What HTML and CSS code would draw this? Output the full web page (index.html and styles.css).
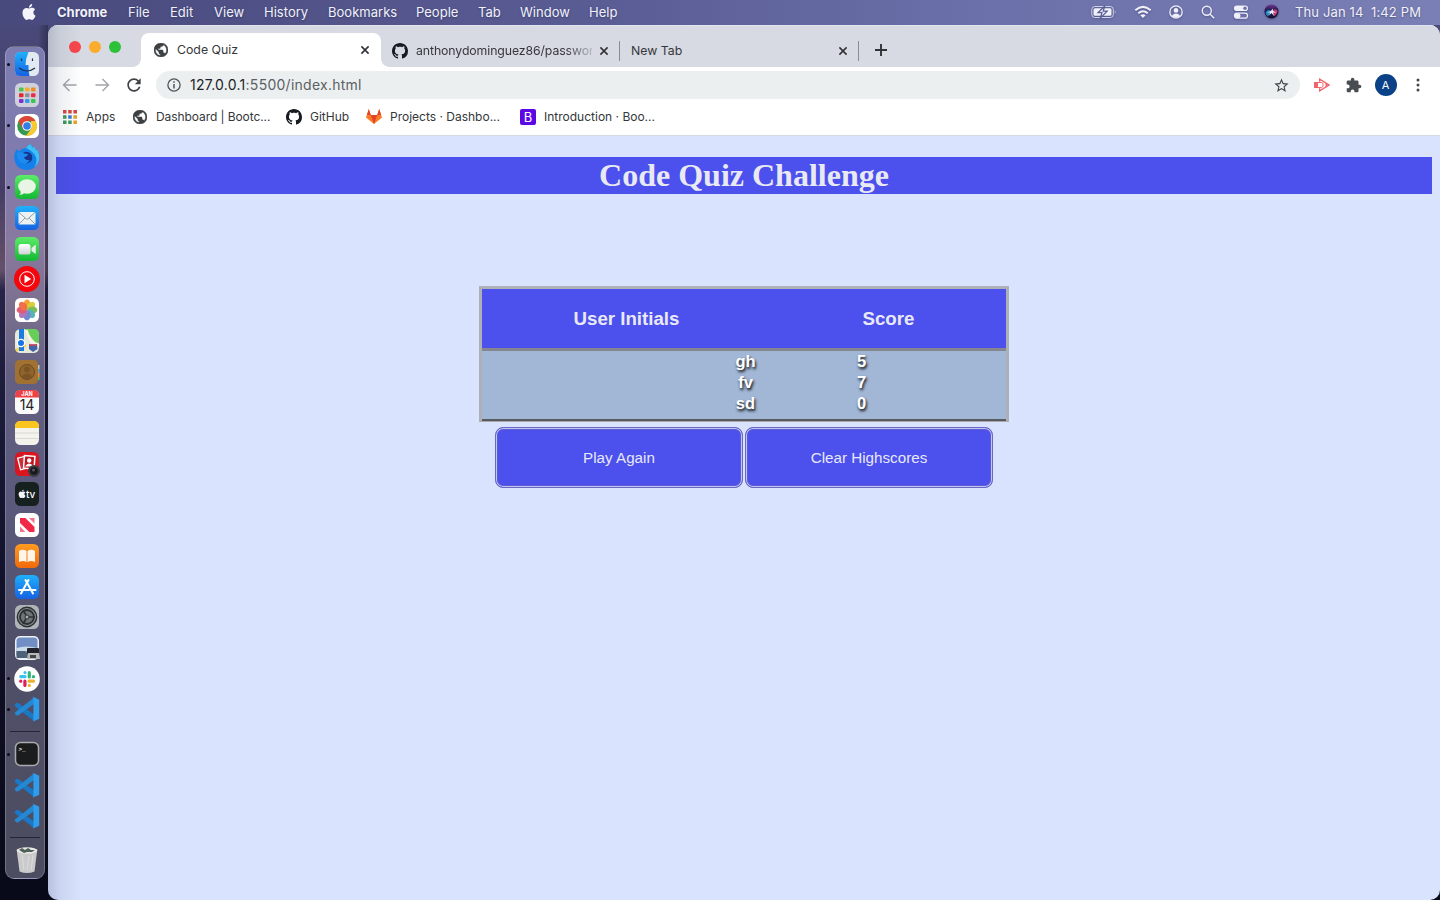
FILE: index.html
```html
<!DOCTYPE html>
<html lang="en">
<head>
<meta charset="utf-8">
<title>Code Quiz</title>
<link rel="stylesheet" href="styles.css">
</head>
<body>
<svg class="defs" width="0" height="0">
  <defs>
    <linearGradient id="blue" x2="0" y2="1"><stop stop-color="#1fb0fb"/><stop offset="1" stop-color="#1662e2"/></linearGradient>
    <linearGradient id="green" x2="0" y2="1"><stop stop-color="#5cec68"/><stop offset="1" stop-color="#12b832"/></linearGradient>
    <linearGradient id="orange" x2="0" y2="1"><stop stop-color="#ff9b22"/><stop offset="1" stop-color="#f26a0b"/></linearGradient>
    <linearGradient id="silver" x2="0" y2="1"><stop stop-color="#fff"/><stop offset="1" stop-color="#d0d3d6"/></linearGradient>
    <linearGradient id="siriFill" x2="0" y2="1"><stop stop-color="#7a3596"/><stop offset=".4" stop-color="#1d1b48"/><stop offset="1" stop-color="#15122f"/></linearGradient>
    <symbol id="globe" viewBox="2 2 20 20"><path d="M12 2C6.48 2 2 6.48 2 12s4.48 10 10 10 10-4.48 10-10S17.52 2 12 2zm-1 17.93c-3.95-.49-7-3.85-7-7.93 0-.62.08-1.21.21-1.79L9 15v1c0 1.1.9 2 2 2v1.93zm6.9-2.54c-.26-.81-1-1.39-1.9-1.39h-1v-3c0-.55-.45-1-1-1H8v-2h2c.55 0 1-.45 1-1V7h2c1.1 0 2-.9 2-2v-.41c2.93 1.19 5 4.06 5 7.41 0 2.08-.8 3.97-2.1 5.39z" fill="#3c4043" stroke="#3c4043" stroke-width=".7"/></symbol>
    <symbol id="github" viewBox="0 0 16 16"><path fill="#161b22" d="M8 0C3.58 0 0 3.58 0 8c0 3.54 2.29 6.53 5.47 7.59.4.07.55-.17.55-.38 0-.19-.01-.82-.01-1.49-2.01.37-2.53-.49-2.69-.94-.09-.23-.48-.94-.82-1.13-.28-.15-.68-.52-.01-.53.63-.01 1.08.58 1.23.82.72 1.21 1.87.87 2.33.66.07-.52.28-.87.51-1.07-1.78-.2-3.64-.89-3.64-3.95 0-.87.31-1.59.82-2.15-.08-.2-.36-1.02.08-2.12 0 0 .67-.21 2.2.82.64-.18 1.32-.27 2-.27s1.36.09 2 .27c1.53-1.04 2.2-.82 2.2-.82.44 1.1.16 1.92.08 2.12.51.56.82 1.27.82 2.15 0 3.07-1.87 3.75-3.65 3.95.29.25.54.73.54 1.48 0 1.07-.01 1.93-.01 2.2 0 .21.15.46.55.38A8.01 8.01 0 0 0 16 8c0-4.42-3.58-8-8-8z"/></symbol>
    <symbol id="close" viewBox="0 0 10 10"><path d="M1.4 1.4l7.2 7.2M8.6 1.4L1.4 8.6" stroke="#303236" stroke-width="1.6"/></symbol>
    <symbol id="apple" viewBox="0 0 24 24"><path fill="#f4f4fa" d="M12.152 6.896c-.948 0-2.415-1.078-3.96-1.04-2.04.027-3.91 1.183-4.961 3.014-2.117 3.675-.546 9.103 1.519 12.09 1.013 1.454 2.208 3.09 3.792 3.039 1.52-.065 2.09-.987 3.935-.987 1.831 0 2.35.987 3.96.948 1.637-.026 2.676-1.48 3.676-2.948 1.156-1.688 1.636-3.325 1.662-3.415-.039-.013-3.182-1.221-3.22-4.857-.026-3.04 2.48-4.494 2.597-4.559-1.429-2.09-3.623-2.324-4.39-2.376-2-.156-3.675 1.09-4.61 1.09zM15.53 3.83c.843-1.012 1.4-2.427 1.245-3.83-1.207.052-2.662.805-3.532 1.818-.78.896-1.454 2.338-1.273 3.714 1.338.104 2.715-.688 3.559-1.701"/></symbol>
    <symbol id="vscode" viewBox="0 0 26 26"><path d="M.8 8.600l1.700-1.700 1.800.1L20 18.500v6.500L.9 10.200z" fill="#1a78c6"/><path d="M20 1.500v6.500L4.300 19.300l-1.800.1-1.700-1.700.1-1.300z" fill="#2588d2"/><path d="M18.500.5l6.700 3.200v19l-6.700 3c.6-.4.900-.9.900-1.700V2.200c0-.7-.3-1.300-.9-1.700z" fill="#2f9dec"/></symbol>
  </defs>
</svg>

<header class="menubar">
  <svg class="apple" width="16" height="16"><use href="#apple"/></svg>
  <nav class="menus"><b>Chrome</b><span>File</span><span>Edit</span><span>View</span><span>History</span><span>Bookmarks</span><span>People</span><span>Tab</span><span>Window</span><span>Help</span></nav>
  <div class="status">
    <svg width="26" height="16" viewBox="0 0 26 16"><rect x=".8" y="2.500" width="21.500" height="11" rx="3" fill="none" stroke="#d2d2e7"/><rect x="2.500" y="4.200" width="18" height="7.600" rx="1.500" fill="#f0f0fa"/><path d="M13.800 2L7 8.700h4L9.300 14l6.900-6.900h-4z" fill="#f0f0fa" stroke="#575c94" stroke-width="1.200"/><path d="M23.800 6.200v3.600q1.600-1.800 0-3.600" fill="#d2d2e7"/></svg>
    <svg width="18" height="14" viewBox="0 0 18 14"><g fill="none" stroke="#f0f0fa" stroke-width="2"><path d="M1.300 5.200q7.700-6.600 15.400 0"/><path d="M4.300 8.200q4.700-3.900 9.400 0"/></g><path d="M6.300 10.200q2.700-2 5.400 0L9 13z" fill="#f0f0fa"/></svg>
    <svg width="14" height="14" viewBox="0 0 14 14"><circle cx="7" cy="7" r="6.200" fill="none" stroke="#f0f0fa" stroke-width="1.300"/><circle cx="7" cy="5.400" r="2.300" fill="#f0f0fa"/><path d="M2.700 11q4.300-4.800 8.600 0-4.300 3.300-8.600 0" fill="#f0f0fa"/></svg>
    <svg width="14" height="14" viewBox="0 0 14 14"><g fill="none" stroke="#f0f0fa" stroke-width="1.400"><circle cx="5.800" cy="5.800" r="4.500"/><path d="M9.200 9.200l4 4"/></g></svg>
    <svg width="16" height="16" viewBox="0 0 16 16"><rect x="1" y="1.400" width="14" height="5.600" rx="2.800" fill="#f0f0fa"/><circle cx="12" cy="4.200" r="1.700" fill="#6d70a8"/><rect x="1.500" y="9.200" width="13" height="5" rx="2.500" fill="none" stroke="#f0f0fa" stroke-width="1.200"/><rect x="1.500" y="9.200" width="6" height="5" rx="2.500" fill="#f0f0fa"/></svg>
    <svg width="15" height="15" viewBox="0 0 15 15"><circle cx="7.500" cy="7.500" r="7" fill="url(#siriFill)"/><path d="M1.500 8.500Q4 4.500 7.500 7L4 12.500Q2 11 1.500 8.500z" fill="#2b86c9"/><path d="M8 7q3-3.500 5.700 0-1 4-3.200 5.200z" fill="#c23a72"/><path d="M3 8.500L7 7l1.500-2.500L9 7l3.500 1.500L9 8.500l1.200 3.700L7.500 9 5 11.500l1.200-3z" fill="#e6f3fb"/></svg>
  </div>
  <time>Thu Jan 14&nbsp; 1:42 PM</time>
</header>

<div class="desktop">
<aside class="rail"><div class="dock">
  <div class="app running"><svg viewBox="0 0 26 26"><rect x="1" y="1" width="24" height="24" rx="5.500" fill="#e3e9f0"/><path d="M14.500 1q-3 7-3 13h3q-.2 6 1 11H6.500Q1 25 1 19.500v-13Q1 1 6.500 1z" fill="url(#blue)"/><path d="M7.500 7.500v2.600M18.500 7.500v2.600M5 17q8 6 16 0" stroke="#17304b" stroke-width="1.200" fill="none"/></svg></div>
  <div class="app"><svg viewBox="0 0 26 26"><rect x="1" y="1" width="24" height="24" rx="5.500" fill="#cfd0dc"/><g><rect x="5" y="5.500" width="4.500" height="4" rx="1" fill="#4ac64b"/><rect x="11" y="5.500" width="4.500" height="4" rx="1" fill="#f2af27"/><rect x="17" y="5.500" width="4.500" height="4" rx="1" fill="#f08a1d"/><rect x="5" y="11.200" width="4.500" height="4" rx="1" fill="#e4272d"/><rect x="11" y="11.200" width="4.500" height="4" rx="1" fill="#8d9197"/><rect x="17" y="11.200" width="4.500" height="4" rx="1" fill="#e82c4b"/><rect x="5" y="17" width="4.500" height="4" rx="1" fill="#8131ca"/><rect x="11" y="17" width="4.500" height="4" rx="1" fill="#2d9fe6"/><rect x="17" y="17" width="4.500" height="4" rx="1" fill="#37c552"/></g></svg></div>
  <div class="app running"><svg viewBox="0 0 26 26"><rect x="1" y="1" width="24" height="24" rx="5.500" fill="#fff"/><circle cx="13" cy="13" r="9.800" fill="#36994f"/><path d="M4.500 8A9.800 9.800 0 0 1 21.500 8H13l-4.500 7.500z" fill="#dd4537"/><path d="M21.500 8A9.800 9.800 0 0 1 12 22.800L17.400 15.500 17 8z" fill="#f9c832"/><circle cx="13" cy="13" r="4.800" fill="#fff"/><circle cx="13" cy="13" r="3.800" fill="#347de8"/></svg></div>
  <div class="app"><svg viewBox="0 0 26 26"><path d="M2.500 5l2.500 2.500Q8 4 12 4q2-3.500 5-4 0 2.500 2 4l1-1.500q1.500 1.500 2 4l1.500-1q3 8 1 12.500-3.500 8-11.500 8Q4 26 1 18-1 11 2.500 5z" fill="#1580ea"/><path d="M12 4q2-3.500 5-4 0 2.500 2 4l1-1.500q1.500 1.500 2 4l1.500-1q3 8 1 12.500-1.500 3.500-4.500 5.500 3.500-5 2-10-2-6-10-9.500z" fill="#3fc0f5"/><circle cx="12.500" cy="13.500" r="5.800" fill="#15368c"/><path d="M2.500 9q4-2 7.500.5l4 .5q-.5 2.500-4 3 1.500 4 6 3-3 4.500-8 3Q3 16.500 2.500 9z" fill="#1c8cf0"/></svg></div>
  <div class="app running"><svg viewBox="0 0 26 26"><rect x="1" y="1" width="24" height="24" rx="5.500" fill="url(#green)"/><ellipse cx="13" cy="12.500" rx="8.800" ry="7.300" fill="#e8f4e4"/><path d="M7 17q0 3-2 4 4 0 6-3" fill="#e8f4e4"/></svg></div>
  <div class="app"><svg viewBox="0 0 26 26"><rect x="1" y="1" width="24" height="24" rx="5.500" fill="url(#blue)"/><rect x="4.500" y="7" width="17" height="12.500" rx="1.500" fill="#eef1f2"/><path d="M5 7.500l8 7 8-7M5 19l6-6M21 19l-6-6" fill="none" stroke="#97a0a7"/></svg></div>
  <div class="app"><svg viewBox="0 0 26 26"><rect x="1" y="1" width="24" height="24" rx="5.500" fill="url(#green)"/><rect x="4.500" y="8" width="12" height="10.500" rx="2.500" fill="url(#silver)"/><path d="M17.500 12l3.500-3q.8-.4.8.5v7.700q0 .8-.8.4l-3.500-2.600z" fill="#e5eee5"/></svg></div>
  <div class="app"><svg viewBox="0 0 26 26"><circle cx="13" cy="13" r="13" fill="#f5050c"/><circle cx="13" cy="13" r="7.300" fill="none" stroke="#fff" stroke-width="1"/><path d="M10.500 8.800l6.700 4.200-6.700 4.200z" fill="#fff"/></svg></div>
  <div class="app"><svg viewBox="0 0 26 26"><rect x="1" y="1" width="24" height="24" rx="5.500" fill="#fff"/><g opacity=".92"><ellipse cx="13" cy="7.600" rx="3.500" ry="5" fill="#f59a27"/><ellipse cx="13" cy="7.600" rx="3.500" ry="5" fill="#d8ca2a" transform="rotate(45 13 13)"/><ellipse cx="13" cy="7.600" rx="3.500" ry="5" fill="#70b84b" transform="rotate(90 13 13)"/><ellipse cx="13" cy="7.600" rx="3.500" ry="5" fill="#4cadb1" transform="rotate(135 13 13)"/><ellipse cx="13" cy="7.600" rx="3.500" ry="5" fill="#657fce" transform="rotate(180 13 13)"/><ellipse cx="13" cy="7.600" rx="3.500" ry="5" fill="#a66cb8" transform="rotate(225 13 13)"/><ellipse cx="13" cy="7.600" rx="3.500" ry="5" fill="#e24c68" transform="rotate(270 13 13)"/><ellipse cx="13" cy="7.600" rx="3.500" ry="5" fill="#ef6438" transform="rotate(315 13 13)"/></g></svg></div>
  <div class="app"><svg viewBox="0 0 26 26"><rect x="1" y="1" width="24" height="24" rx="5.500" fill="#e8ead9"/><path d="M11 1h8.500Q25 1 25 6.500V15Q12 14 11 1z" fill="#68ce5a"/><path d="M12 2q4 13 13 16" stroke="#f7f3e8" stroke-width="3" fill="none"/><path d="M2 22.500L12 17" stroke="#fbd34a" stroke-width="3"/><path d="M5 1h5v22H5z" fill="#1c7be0"/><circle cx="7" cy="15" r="4.300" fill="#fff"/><circle cx="7" cy="15" r="3" fill="#1675e6"/><path d="M15 16q4 1 8 0l.5 5-4.500 3-4-3z" fill="#4265a9"/><path d="M15 17h8" stroke="#d34254" stroke-width="1.500"/></svg></div>
  <div class="app"><svg viewBox="0 0 26 26"><path d="M23 6h2.500v4H23z" fill="#c6c6c1"/><path d="M23 10h2.500v4H23z" fill="#54a4c7"/><path d="M23 14h2.500v4H23z" fill="#f18c3e"/><path d="M23 18h2.500v3H23z" fill="#53ba5c"/><rect x="1" y="1" width="23" height="24" rx="4.500" fill="#a07132"/><circle cx="13" cy="13" r="7.500" fill="#8f632c" stroke="#6f4a1e"/><circle cx="13" cy="10.500" r="3" fill="#7b5425"/><path d="M7.500 17.500q5.500-6 11 0-5.500 5-11 0" fill="#7b5425"/></svg></div>
  <div class="app"><svg viewBox="0 0 26 26"><rect x="1" y="1" width="24" height="24" rx="5.500" fill="#fafafa"/><path d="M1 8.500v-2Q1 1 6.500 1h13Q25 1 25 6.500v2z" fill="#ee4146"/><text x="13" y="7" class="cal-month">JAN</text><text x="13" y="20.800" class="cal-day">14</text></svg></div>
  <div class="app"><svg viewBox="0 0 26 26"><rect x="1" y="1" width="24" height="24" rx="5.500" fill="#f3f2ed"/><path d="M1 8V6.500Q1 1 6.500 1h13Q25 1 25 6.500V8z" fill="#fbc520"/><path d="M1 13h24M1 18.500h24" stroke="#d4d2cd" stroke-width=".8"/></svg></div>
  <div class="app"><svg viewBox="0 0 26 26"><rect x="1" y="1" width="24" height="24" rx="5.500" fill="#db1520"/><rect x="5" y="6" width="9" height="12" fill="#c9303a" stroke="#fff" stroke-width="1.300" transform="rotate(-14 9 12)"/><rect x="10" y="5" width="10.500" height="12.500" fill="#bb1824" stroke="#fff" stroke-width="1.500" transform="rotate(4 15 11)"/><circle cx="15.200" cy="9.500" r="2.200" fill="#fff"/><path d="M11 15.500q4-6 8.500 0z" fill="#fff"/><circle cx="20" cy="20" r="6" fill="#393b40"/><circle cx="20" cy="20" r="3.800" fill="#17181d"/><circle cx="19.500" cy="19" r="1.500" fill="#595461"/></svg></div>
  <div class="app"><svg viewBox="0 0 26 26"><rect x="1" y="1" width="24" height="24" rx="5.500" fill="#16201f"/><use href="#apple" x="3.800" y="8.500" width="8.500" height="8.500"/><text x="12" y="16.500" class="tv">tv</text></svg></div>
  <div class="app"><svg viewBox="0 0 26 26"><rect x="1" y="1" width="24" height="24" rx="5.500" fill="#fff"/><path d="M6 6h5.300L20.500 15v5h-5.200L6 11z" fill="#f02747"/><path d="M15 6h5.500v5.500zM6 14.500V20h5.500z" fill="#ee778b"/></svg></div>
  <div class="app"><svg viewBox="0 0 26 26"><rect x="1" y="1" width="24" height="24" rx="5.500" fill="url(#orange)"/><path d="M12.500 8Q9 5.500 5 8v11q4-2 7.500 0zM13.500 8Q17 5.500 21 8v11q-4-2-7.500 0z" fill="#fff6e9"/></svg></div>
  <div class="app"><svg viewBox="0 0 26 26"><rect x="1" y="1" width="24" height="24" rx="5.500" fill="url(#blue)"/><path d="M11.500 6l7.500 13.500M14.500 6L7 19.500M5 16h10M18 16h3.500" stroke="#fff" stroke-width="2" stroke-linecap="round"/></svg></div>
  <div class="app"><svg viewBox="0 0 26 26"><rect x="1" y="1" width="24" height="24" rx="5.500" fill="#aeb5b8"/><circle cx="13" cy="13" r="9.700" fill="#898e91" stroke="#2e3235" stroke-width="1.400"/><circle cx="13" cy="13" r="7" fill="#70757a" stroke="#2e3235" stroke-width="1.800"/><circle cx="13" cy="13" r="2" fill="#a9afb1" stroke="#2e3235"/><path d="M15 13h6M12 11L9 6M12 15l-3 5" stroke="#2e3235" stroke-width="1.700"/></svg></div>
  <div class="app"><svg viewBox="0 0 26 26"><rect x="1" y="1" width="24" height="24" rx="5" fill="#eef1f5"/><rect x="2.500" y="2.500" width="21" height="20" rx="3.500" fill="#718fc4"/><path d="M2.500 13q10-3 21 0v3h-21z" fill="#cbdce8"/><path d="M2.500 16l8 0 4 3v4h-12z" fill="#4d6179"/><rect x="13" y="13" width="12" height="6" rx="1" fill="#202329"/><path d="M14 18h11l1 6H13z" fill="#b7b9b5"/><path d="M16 20h6v3h-6z" fill="#42464b"/></svg></div>
  <div class="app running"><svg viewBox="0 0 26 26"><circle cx="13" cy="13" r="12.800" fill="#fff"/><g stroke-width="3.200" stroke-linecap="round"><path d="M6.700 10.600h4.400M11 6.500v.1" stroke="#36c5f0"/><path d="M15.300 6.700v4.300M19.400 10.700h.1" stroke="#2eb67d"/><path d="M15.100 15.200h4.400M15.300 19.400v.1" stroke="#ecb22e"/><path d="M10.900 15.200v4.300M6.700 15.200h.1" stroke="#e01e5a"/></g></svg></div>
  <div class="app running"><svg><use href="#vscode"/></svg></div>
  <hr>
  <div class="app running"><svg viewBox="0 0 26 26"><rect x="1.500" y="1.500" width="23" height="23" rx="5" fill="#1b1c1d" stroke="#a9acae" stroke-width="1.500"/><text x="4.500" y="10" class="prompt">&gt;_</text></svg></div>
  <div class="app"><svg><use href="#vscode"/></svg></div>
  <div class="app"><svg><use href="#vscode"/></svg></div>
  <hr>
  <div class="app"><svg viewBox="0 0 26 26"><path d="M2.700 2.500h20.600l-2.800 22q-7.500 3-15 0z" fill="#c9cac9"/><ellipse cx="13" cy="3.500" rx="10.300" ry="3.200" fill="#e8e9e6"/><path d="M5 3l3-2 3 2 3-2 3 2 4 0-3 2-5 0-3 1z" fill="#505f59"/><path d="M8 8l2 15M15 9l-2 14M19 8l-2 15" stroke="#dbdcdb" fill="none"/></svg></div>
</div></aside>

<main class="window">
  <div class="tabstrip">
    <div class="lights"><i class="red"></i><i class="amber"></i><i class="lime"></i></div>
    <div class="tab active"><svg width="14" height="14"><use href="#globe"/></svg><span>Code Quiz</span><svg class="x" width="10" height="10"><use href="#close"/></svg></div>
    <div class="tab repo"><svg width="16" height="16"><use href="#github"/></svg><span class="fade">anthonydominguez86/passwor</span><svg class="x" width="10" height="10"><use href="#close"/></svg></div>
    <div class="tab blank"><span>New Tab</span><svg class="x" width="10" height="10"><use href="#close"/></svg></div>
    <svg class="plus" width="12" height="12" viewBox="0 0 12 12"><path d="M6 0v12M0 6h12" stroke="#303236" stroke-width="1.900"/></svg>
  </div>
  <div class="toolbar">
    <svg width="20" height="20" viewBox="0 0 20 20"><path d="M16.500 10h-13M9.500 4l-6 6 6 6" fill="none" stroke="#a2a4a7" stroke-width="1.400"/></svg>
    <svg width="20" height="20" viewBox="0 0 20 20"><path d="M3.500 10h13M10.500 4l6 6-6 6" fill="none" stroke="#a2a4a7" stroke-width="1.400"/></svg>
    <svg width="20" height="20" viewBox="0 0 24 24"><path fill="#3f4246" d="M17.650 6.350C16.200 4.900 14.210 4 12 4c-4.420 0-7.990 3.580-7.990 8s3.570 8 7.990 8c3.730 0 6.840-2.550 7.730-6h-2.080c-.82 2.330-3.040 4-5.650 4-3.310 0-6-2.690-6-6s2.690-6 6-6c1.660 0 3.140.69 4.220 1.780L13 11h7V4l-2.350 2.350z"/></svg>
    <div class="omnibox">
      <svg width="14" height="14" viewBox="0 0 14 14"><circle cx="7" cy="7" r="6.100" fill="none" stroke="#515458" stroke-width="1.300"/><path d="M7 6v4.500M7 3.300v1.500" stroke="#515458" stroke-width="1.500"/></svg>
      <span class="url"><em>127.0.0.1</em>:5500/index.html</span>
      <svg class="star" width="17" height="17" viewBox="0 0 24 24"><path fill="#44474b" d="M22 9.240l-7.190-.62L12 2 9.190 8.630 2 9.240l5.460 4.730L5.820 21 12 17.270 18.180 21l-1.630-7.030L22 9.240zM12 15.400l-3.760 2.270 1-4.280-3.320-2.880 4.380-.38L12 6.100l1.710 4.040 4.380.38-3.320 2.880 1 4.280L12 15.400z"/></svg>
    </div>
    <div class="extensions">
      <svg width="16" height="14" viewBox="0 0 16 14"><path d="M0 4h4v6H0z" fill="#f2646b"/><path d="M5.700 3.700V1.200L15 7l-9.300 5.800v-2.500" fill="none" stroke="#f2646b" stroke-width="1.400"/><path d="M4 4.500h3.500l1.500 1v3l-1.500 1H4" fill="none" stroke="#f2646b"/><path d="M11.500 5l3 2-3 2z" fill="#f2646b"/></svg>
      <svg width="16" height="16" viewBox="1 0 23 23"><path fill="#494c50" d="M20.500 11H19V7c0-1.100-.9-2-2-2h-4V3.500C13 2.120 11.880 1 10.500 1S8 2.120 8 3.500V5H4c-1.100 0-1.990.9-1.990 2v3.800H3.500c1.490 0 2.700 1.210 2.700 2.700s-1.210 2.700-2.700 2.700H2V20c0 1.100.9 2 2 2h3.800v-1.500c0-1.490 1.210-2.700 2.700-2.700 1.490 0 2.700 1.210 2.700 2.700V22H17c1.100 0 2-.9 2-2v-4h1.500c1.380 0 2.500-1.120 2.500-2.500S21.880 11 20.500 11z"/></svg>
      <span class="avatar">A</span>
      <svg width="4" height="14" viewBox="0 0 4 14"><g fill="#44474b"><circle cx="2" cy="2" r="1.500"/><circle cx="2" cy="7" r="1.500"/><circle cx="2" cy="12" r="1.500"/></g></svg>
    </div>
  </div>
  <div class="bookmarks">
    <span><svg width="14" height="14" viewBox="0 0 14 14"><path d="M0 0h3.500v3.500H0zM5.200 0h3.500v3.500H5.200zM10.400 0H14v3.500h-3.600z" fill="#d7483f"/><path d="M0 5.200h3.500v3.500H0z" fill="#3d9b5b"/><path d="M5.200 5.200h3.500v3.500H5.200z" fill="#3978d8"/><path d="M10.400 5.200H14v3.500h-3.600zM10.400 10.400H14V14h-3.600z" fill="#e6a329"/><path d="M0 10.400h3.500V14H0zM5.200 10.400h3.500V14H5.200z" fill="#3d9b5b"/></svg>Apps</span>
    <span><svg width="14" height="14"><use href="#globe"/></svg>Dashboard | Bootc...</span>
    <span><svg width="16" height="16"><use href="#github"/></svg>GitHub</span>
    <span><svg width="16" height="15" viewBox="0 0 16 15"><path d="M8 15L0 8.500 2.800 0l2 6h6.400l2-6L16 8.500z" fill="#fc7b26"/><path d="M8 15L4.800 6h6.400z" fill="#e24329"/><path d="M2.800 0L.9 6h3.900zM13.200 0l1.900 6h-3.900z" fill="#e24329"/></svg>Projects · Dashbo...</span>
    <span><i class="bootstrap">B</i>Introduction · Boo...</span>
  </div>
  <section class="page">
    <h1>Code Quiz Challenge</h1>
    <div class="scores">
      <div class="score-head"><span>User Initials</span><span>Score</span></div>
      <div class="score-body">
        <span>gh</span><span>5</span>
        <span>fv</span><span>7</span>
        <span>sd</span><span>0</span>
      </div>
    </div>
    <div class="actions"><button>Play Again</button><button>Clear Highscores</button></div>
  </section>
</main>
</div>
</body>
</html>
```

FILE: styles.css
```css
* { box-sizing: border-box; }

body {
  margin: 0;
  width: 1440px;
  height: 900px;
  overflow: hidden;
  display: flex;
  flex-direction: column;
  font-family: Inter, "Liberation Sans", sans-serif;
  background: linear-gradient(180deg, #4a4b7e 0, #46426c 100px, #463e66 190px, #645069 270px, #282449 290px, #1b1b3b 400px, #101027 620px, #080a18 900px);
}

svg { display: block; flex: none; }
.defs { position: absolute; }

.menubar {
  height: 25px;
  flex: none;
  display: flex;
  align-items: center;
  padding: 0 0 2px 21px;
  font-size: 13px;
  color: #f1f1fa;
  background: linear-gradient(90deg, #484a7d, #595b93 40%, #6b70aa 68%, #7a7fb5);
  text-shadow: 0 1px 2px #24264f80;
}
.menus {
  margin-left: 20px;
  display: grid;
  grid-template-columns: 71px 42px 44px 50px 64px 88px 62px 42px 69px 60px;
  white-space: nowrap;
}
.menus span { letter-spacing: .02px; }
.status {
  margin-left: 442px;
  display: grid;
  grid-template-columns: 43px 35px 32px 32px 31px 31px;
  align-items: center;
}
.status svg { filter: drop-shadow(0 1px 1px #24264f66); }
.menubar time { white-space: nowrap; letter-spacing: .13px; }

.desktop { flex: 1; min-height: 0; display: flex; }
.rail { width: 48px; padding: 21px 0 0 5px; flex: none; background: linear-gradient(90deg, transparent 38px, #07071855 48px); }
.dock {
  width: 40px;
  height: 833px;
  padding-top: 2px;
  border: 1px solid #ffffff35;
  border-radius: 9px;
  background: linear-gradient(180deg, #7d7db1 0, #807bae 120px, #88799e 200px, #7b6f8e 260px, #625f82 330px, #5a597c 460px, #504f69 600px, #4c4d60 833px);
}
.app { position: relative; height: 30.72px; padding-left: 7.500px; display: flex; align-items: center; }
.app svg { width: 26px; height: 26px; }
.running::before { content: ""; position: absolute; left: 1px; width: 3px; height: 3px; border-radius: 50%; background: #0b0b1c; }
.dock hr { height: 1px; margin: 6.500px 4px; border: 0; background: #252536; }
.cal-month { font: 700 5.500px Inter, sans-serif; fill: #fff; text-anchor: middle; }
.cal-day { font: 400 14px Inter, sans-serif; fill: #222; text-anchor: middle; }
.tv { font: 500 10px Inter, sans-serif; fill: #fff; }
.prompt { font: 700 6px "Liberation Mono", monospace; fill: #eee; }

.window {
  position: relative;
  flex: 1;
  min-width: 0;
  display: flex;
  flex-direction: column;
  border-radius: 10px;
  overflow: hidden;
  background: #d9e3fd;
}
.window::after {
  content: "";
  position: absolute;
  inset: 0 auto 0 0;
  width: 34px;
  background: linear-gradient(90deg, #26346030, #26346014 35%, transparent);
  pointer-events: none;
}
.tabstrip { height: 42px; flex: none; display: flex; align-items: center; background: #d7dae2; border-top: 1px solid #e3e5ee; font-size: 12.300px; color: #36383c; }
.tabstrip span { margin-top: -1px; }
.lights { width: 93px; padding: 1px 0 0 21px; display: flex; gap: 8px; }
.lights i { width: 12px; height: 12px; border-radius: 50%; }
.red { background: #f9464b; }
.amber { background: #fbac2c; }
.lime { background: #2cc138; }
.tab { display: flex; align-items: center; height: 34px; white-space: nowrap; }
.tab .x { margin-left: auto; }
.active { position: relative; width: 240px; margin-top: 7px; padding: 0 11px 0 13px; gap: 9px; background: #fff; border-radius: 8px 8px 0 0; }
.active::before, .active::after { content: ""; position: absolute; bottom: 0; width: 8px; height: 8px; }
.active::before { right: 100%; background: radial-gradient(circle at 0 0, transparent 7.500px, #fff 8px); }
.active::after { left: 100%; background: radial-gradient(circle at 100% 0, transparent 7.500px, #fff 8px); }
.repo, .blank { height: 20px; margin-top: 8px; border-right: 1px solid #898c93; }
.repo { width: 239px; padding: 0 10px 0 11px; gap: 8px; }
.fade { width: 176px; margin-right: -2px; letter-spacing: -.1px; -webkit-mask-image: linear-gradient(90deg, #000 85%, #0003); mask-image: linear-gradient(90deg, #000 85%, #0003); }
.blank { width: 239px; padding: 0 10px 0 11px; }
.plus { margin: 7px 0 0 16px; }

.toolbar { height: 36px; flex: none; display: flex; align-items: center; padding-left: 12px; gap: 12px; background: #fff; }
.omnibox { width: 1144px; height: 28px; display: flex; align-items: center; gap: 9px; padding: 0 10px 0 11px; border-radius: 14px; background: #ebeff0; }
.url { margin-top: -1px; font-size: 14px; color: #5c5f64; letter-spacing: .26px; }
.url em { font-style: normal; color: #202226; }
.star { margin-left: auto; }
.extensions { display: flex; align-items: center; margin-left: 2px; }
.extensions > :nth-child(2) { margin-left: 16px; }
.avatar { width: 22px; height: 22px; margin: 0 19px 0 12.500px; border-radius: 50%; background: #0b4287; color: #fff; font-size: 11px; line-height: 22px; text-align: center; }

.bookmarks { height: 33px; flex: none; display: grid; grid-template-columns: 70px 153px 80px 154px 180px; align-items: center; padding: 0 0 5px 15px; background: #fff; border-bottom: 1px solid #d5d9e0; font-size: 12px; color: #34373b; white-space: nowrap; }
.bookmarks > span { display: flex; align-items: center; gap: 8px; }
.bookmarks > span:first-child, .bookmarks > span:nth-child(2) { gap: 9px; }
.bookmarks > span:nth-child(2) { letter-spacing: -.08px; }
.bootstrap { width: 16px; height: 16px; border-radius: 2px; background: #5c08e5; color: #fff; font: 13px/16px Inter, sans-serif; text-align: center; }

.page { flex: 1; padding: 21px 8px 0; display: flex; flex-direction: column; align-items: center; font-family: "Liberation Sans", Arial, sans-serif; }
.page h1 { width: 100%; height: 37px; margin: 0; background: #4c50ec; color: #e9e9f4; font: 700 32px/37px "Liberation Serif", serif; text-align: center; }
.scores { width: 530px; height: 136px; margin-top: 92px; border: 3px solid #aeb0b7; border-bottom: 1px solid #a4a6aa; background: #a2b7d6; display: flex; flex-direction: column; }
.score-head { height: 62px; flex: none; display: grid; grid-template-columns: 289px 235px; align-items: center; border-bottom: 3px solid #85868e; background: #4c50ec; color: #e9e9f6; font-size: 18.700px; font-weight: 700; text-align: center; }
.score-body { flex: 1; display: grid; grid-template-columns: 60px 56px; column-gap: 58px; grid-auto-rows: 21px; padding-left: 233.500px; border-bottom: 2px solid #595a5e; color: #fff; font-size: 16.500px; font-weight: 700; line-height: 20px; text-align: center; text-shadow: 1px 2px 3px #000; }
.actions { margin-top: 5px; display: flex; gap: 2px; }
.actions button {
  width: 248px;
  height: 61px;
  padding: 0;
  border: 1px solid #6a67c4;
  border-radius: 8px;
  background: #4c50ec;
  box-shadow: inset 0 0 0 1px #c0c4f6, inset 0 0 0 2px #5d5dd0;
  color: #e8e9fa;
  font: 15.200px "Liberation Sans", Arial, sans-serif;
}
```
